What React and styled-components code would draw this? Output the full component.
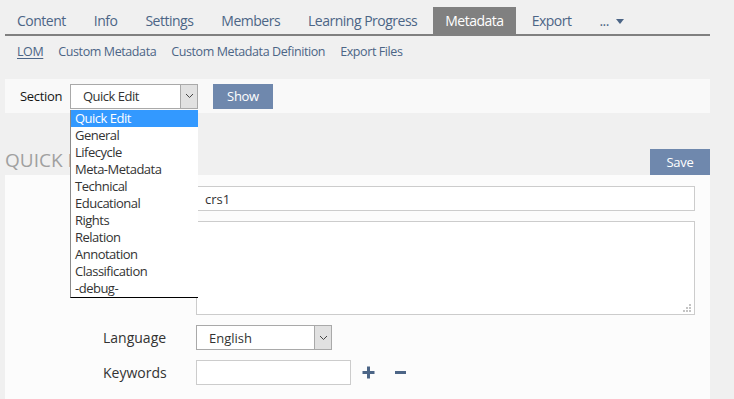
import React from 'react';
import styled, { createGlobalStyle } from 'styled-components';

const Global = createGlobalStyle`
  html, body { margin: 0; padding: 0; background: #f0f0f0; overflow: hidden; }
  body { font-family: "Open Sans", "DejaVu Sans", sans-serif; color: #161616; }
  * { box-sizing: border-box; }
`;

const Page = styled.div`
  width: 705px;
  margin-left: 5px;
  padding-top: 7px;
`;

const TabBar = styled.nav`
  display: flex;
  gap: 4px;
  border-bottom: 2px solid #808080;
`;

const Tab = styled.a`
  display: flex;
  align-items: center;
  gap: 7px;
  height: 27px;
  padding: 1px 12px 0;
  line-height: 26px;
  font-size: 14px;
  letter-spacing: -0.5px;
  text-decoration: none;
  color: ${p => (p.$active ? '#ffffff' : '#4c6586')};
  background: ${p => (p.$active ? '#808080' : 'transparent')};
`;

const SubTabs = styled.div`
  display: flex;
  gap: 15px;
  padding-left: 12px;
  line-height: 32px;
  font-size: 12.5px;
  letter-spacing: -0.4px;
`;

const SubTab = styled.a`
  color: #4c6586;
  text-decoration: ${p => (p.$active ? 'underline' : 'none')};
  text-underline-offset: 2px;
`;

const SectionBar = styled.div`
  margin-top: 11px;
  height: 34px;
  background: #f9f9f9;
  display: flex;
  align-items: center;
  padding-left: 15px;
`;

const SectionLabel = styled.span`
  font-size: 13px;
  letter-spacing: -0.3px;
  color: #161616;
  width: 50px;
  margin-top: -1px;
`;

const SelectBox = styled.div`
  position: relative;
  width: ${p => p.$w}px;
  height: 25px;
  background: #ffffff;
  border: 1px solid #a9a9a9;
  display: flex;
  align-items: center;
  font-size: 13px;
  letter-spacing: ${p => p.$ls || 0}px;
  color: #333;
  padding-left: 12px;
`;

const SelectArrow = styled.span`
  position: absolute;
  right: 0;
  top: 0;
  bottom: 0;
  width: 17px;
  background: #e1e1e1;
  border-left: 1px solid #a9a9a9;
  display: flex;
  align-items: center;
  justify-content: center;
`;

const DropList = styled.ul`
  position: absolute;
  top: 100%;
  left: -1px;
  width: 128px;
  margin: 2px 0 0;
  padding: 0;
  list-style: none;
  background: #ffffff;
  border-left: 1px solid #8a8a8a;
  border-bottom: 1px solid #000;
  z-index: 10;
`;

const DropItem = styled.li`
  height: 17px;
  line-height: 17px;
  padding-left: 4px;
  font-size: 13px;
  letter-spacing: -0.5px;
  color: ${p => (p.$selected ? '#fff' : '#333')};
  background: ${p => (p.$selected ? '#3399ff' : 'transparent')};
`;

const Button = styled.button`
  width: 60px;
  height: ${p => p.$h}px;
  padding: 0;
  border: none;
  background: #6f88ad;
  color: #ffffff;
  font-family: inherit;
  font-size: 13px;
  letter-spacing: -0.3px;
`;

const ShowButton = styled(Button)`
  margin-left: 15px;
`;

const HeadRow = styled.div`
  margin-top: 36px;
  display: flex;
  justify-content: space-between;
  align-items: center;
`;

const Heading = styled.h2`
  margin: 0;
  font-size: 19px;
  font-weight: 400;
  color: #a0a0a0;
  text-transform: uppercase;
  margin-top: -4px;
`;

const Panel = styled.div`
  background: #fcfcfc;
  padding: 11px 15px 30px 98px;
  display: grid;
  grid-template-columns: 93px 499px;
  row-gap: 10px;
  align-items: center;
`;

const Label = styled.label`
  font-size: 14px;
  color: #333;
  align-self: ${p => (p.$top ? 'start' : 'center')};
  padding-top: ${p => (p.$top ? '6px' : '0')};
`;

const TextInput = styled.div`
  width: ${p => p.$w}px;
  height: 25px;
  background: #ffffff;
  border: 1px solid #cccccc;
  font-size: 13px;
  color: #333;
  padding-left: 8px;
  display: flex;
  align-items: center;
`;

const TextArea = styled.div`
  position: relative;
  height: 94px;
  background: #ffffff;
  border: 1px solid #cccccc;
`;

const Grip = styled.svg`
  position: absolute;
  right: 2px;
  bottom: 1px;
`;

const Extra = styled.div`
  display: flex;
  align-items: center;
`;

const IconBtn = styled.span`
  display: inline-flex;
  margin-left: ${p => p.$ml}px;
`;

const Chevron = () => (
  <svg width="9" height="6" viewBox="0 0 9 6">
    <path d="M1 1 L4.5 4.5 L8 1" fill="none" stroke="#444" strokeWidth="1" />
  </svg>
);

const Caret = () => (
  <svg width="8" height="5" viewBox="0 0 8 5">
    <path d="M0 0 H8 L4 5 Z" fill="#4c6586" />
  </svg>
);

const items = ['Quick Edit', 'General', 'Lifecycle', 'Meta-Metadata', 'Technical', 'Educational', 'Rights', 'Relation', 'Annotation', 'Classification', '-debug-'];

export default function App() {
  return (
    <>
      <Global />
      <Page>
        <TabBar>
          <Tab>Content</Tab>
          <Tab>Info</Tab>
          <Tab>Settings</Tab>
          <Tab>Members</Tab>
          <Tab>Learning Progress</Tab>
          <Tab $active>Metadata</Tab>
          <Tab>Export</Tab>
          <Tab>... <Caret /></Tab>
        </TabBar>
        <SubTabs>
          <SubTab $active>LOM</SubTab>
          <SubTab>Custom Metadata</SubTab>
          <SubTab>Custom Metadata Definition</SubTab>
          <SubTab>Export Files</SubTab>
        </SubTabs>
        <SectionBar>
          <SectionLabel>Section</SectionLabel>
          <SelectBox $w={128} $ls={-0.5}>
            Quick Edit
            <SelectArrow><Chevron /></SelectArrow>
            <DropList>
              {items.map((it, i) => (
                <DropItem key={it} $selected={i === 0}>{it}</DropItem>
              ))}
            </DropList>
          </SelectBox>
          <ShowButton $h={25}>Show</ShowButton>
        </SectionBar>
        <HeadRow>
          <Heading>Quick Edit</Heading>
          <Button $h={26}>Save</Button>
        </HeadRow>
        <Panel>
          <Label>Title *</Label>
          <TextInput $w={499}>crs1</TextInput>
          <Label $top>Description</Label>
          <TextArea>
            <Grip width="9" height="9" viewBox="0 0 9 9">
              <g fill="#c4c4c4">
                <rect x="6" y="0" width="2" height="2" />
                <rect x="3" y="3" width="2" height="2" />
                <rect x="6" y="3" width="2" height="2" />
                <rect x="0" y="6" width="2" height="2" />
                <rect x="3" y="6" width="2" height="2" />
                <rect x="6" y="6" width="2" height="2" />
              </g>
            </Grip>
          </TextArea>
          <Label>Language</Label>
          <SelectBox $w={136}>
            English
            <SelectArrow><Chevron /></SelectArrow>
          </SelectBox>
          <Label>Keywords</Label>
          <Extra>
            <TextInput $w={155} />
            <IconBtn $ml={11}>
              <svg width="13" height="13" viewBox="0 0 13 13">
                <path d="M6.5 0.5 V12.5 M0.5 6.5 H12.5" stroke="#4c6586" strokeWidth="3" />
              </svg>
            </IconBtn>
            <IconBtn $ml={20}>
              <svg width="11" height="13" viewBox="0 0 11 13">
                <path d="M0 6.5 H11" stroke="#4c6586" strokeWidth="3" />
              </svg>
            </IconBtn>
          </Extra>
        </Panel>
      </Page>
    </>
  );
}
